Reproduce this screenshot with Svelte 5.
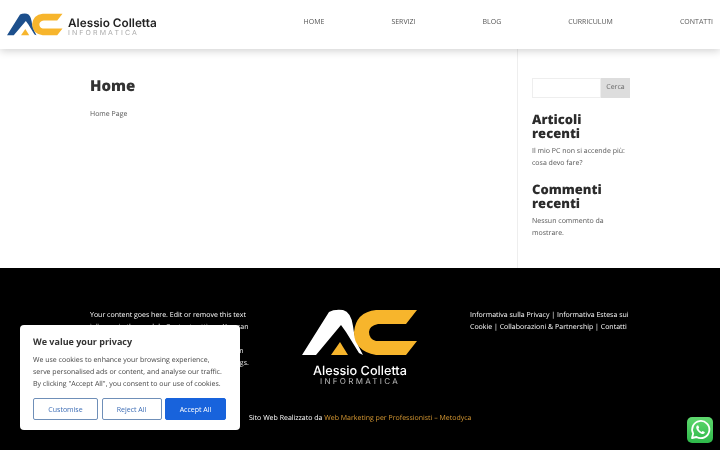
<script>
  const nav = ['HOME', 'SERVIZI', 'BLOG', 'CURRICULUM', 'CONTATTI'];
  const aPath = 'M0 46 L27 3 Q32 0 41 1 Q49 3 51 17 Q52 30 61 46 L57 44 L44 23 L39 16 L14 46 Z';
  const triPath = 'M29 46 L38 33 L46 46 Z';
  const cPath = 'M115 1 L104 15 L76 15 Q67 17 67 23 Q67 30 74 32 L115 32 L104 46 L74 46 Q52 42 52 23 Q54 3 74 1 Z';
</script>

<div class="page">
  <header class="top">
    <div class="brand">
      <svg class="mark" viewBox="0 0 116 47" width="56" height="23" aria-hidden="true">
        <path d={aPath} fill="#1c4f8c" />
        <path d={triPath} fill="#f7b52c" />
        <path d={cPath} fill="#f7b52c" />
      </svg>
      <div class="brand-text">
        <div class="brand-name">Alessio Colletta</div>
        <div class="brand-sub">INFORMATICA</div>
      </div>
    </div>
    <nav class="menu">
      {#each nav as item}<span>{item}</span>{/each}
    </nav>
  </header>

  <main class="content">
    <section class="article">
      <h1>Home</h1>
      <p>Home Page</p>
    </section>
    <aside class="side">
      <div class="search"><div class="field"></div><div class="btn">Cerca</div></div>
      <h2>Articoli recenti</h2>
      <p>Il mio PC non si accende più: cosa devo fare?</p>
      <h2>Commenti recenti</h2>
      <p>Nessun commento da mostrare.</p>
    </aside>
  </main>

  <footer class="foot">
    <div class="cols">
      <p class="col-a">Your content goes here. Edit or remove this text inline or in the module Content settings. You can also style every aspect of this content in the module Design settings and even apply custom CSS to this text in the module Advanced settings.</p>
      <div class="col-b">
        <svg viewBox="0 0 116 47" width="116" height="47" aria-hidden="true">
          <path d={aPath} fill="#fff" />
          <path d={triPath} fill="#f7b52c" />
          <path d={cPath} fill="#f7b52c" />
        </svg>
        <div class="logo-name">Alessio Colletta</div>
        <div class="logo-sub">INFORMATICA</div>
      </div>
      <p class="col-c">Informativa sulla Privacy | Informativa Estesa sui Cookie | Collaborazioni &amp; Partnership | Contatti</p>
    </div>
    <p class="credit">Sito Web Realizzato da <span>Web Marketing per Professionisti – Metodyca</span></p>
  </footer>
</div>

<div class="cookie">
  <h3>We value your privacy</h3>
  <p>We use cookies to enhance your browsing experience, serve personalised ads or content, and analyse our traffic. By clicking "Accept All", you consent to our use of cookies.</p>
  <div class="actions">
    <button class="ghost one">Customise</button>
    <button class="ghost two">Reject All</button>
    <button class="solid">Accept All</button>
  </div>
</div>

<div class="wa">
  <svg viewBox="0 0 26 26" width="26" height="26" aria-hidden="true">
    <defs>
      <linearGradient id="wa-bg" x1="0" y1="0" x2="0" y2="1">
        <stop offset="0" stop-color="#5fd86e" />
        <stop offset="1" stop-color="#2eb84a" />
      </linearGradient>
    </defs>
    <rect width="26" height="26" rx="5" fill="url(#wa-bg)" />
    <path d="M5 21 L6.2 16.6 A8.6 8.6 0 1 1 9.5 20 Z" fill="none" stroke="#fff" stroke-width="1.8" stroke-linejoin="round" />
    <path d="M10 8.5 Q9 9.5 9.2 11 Q10.4 15 15 17 Q16.8 17.5 17.8 15.8 L17.6 14.9 L15.6 13.9 L14.6 15 Q12.4 14 11.4 11.8 L12.2 10.8 L11.3 8.6 Z" fill="#fff" />
  </svg>
</div>

<style>
  :global(body) { margin: 0; background: #fff; overflow: hidden; text-rendering: geometricPrecision; }
  .page { width: 720px; height: 450px; display: flex; flex-direction: column; font-family: "Open Sans", sans-serif; color: #555; font-size: 7px; line-height: 12px; overflow: hidden; filter: blur(.3px); }
  .top { height: 49px; flex: none; display: flex; align-items: center; justify-content: space-between; padding: 0 7px; box-shadow: 0 2px 8px rgba(0,0,0,.18); position: relative; z-index: 2; background: #fff; }
  .brand { display: flex; align-items: center; gap: 5px; }
  .brand-name { font-family: Inter, sans-serif; font-weight: 600; font-size: 11.8px; line-height: 11px; color: #222; margin-top: 5.5px; }
  .brand-sub { font-family: Inter, sans-serif; font-size: 7px; letter-spacing: 2.1px; line-height: 8px; color: #aaa; }
  .menu { display: flex; gap: 67px; margin-top: -3px; padding-left: 1px; }
  .content { height: 219px; flex: none; display: flex; padding-left: 90px; }
  .article { width: 428px; box-sizing: border-box; border-right: 1px solid #eee; padding-top: 27px; }
  h1 { margin: 0 0 13px; font-size: 15px; line-height: 20px; font-weight: 800; color: #333; }
  .article p { margin: 0; }
  .side { width: 98px; margin-left: 14px; padding-top: 29px; }
  .search { display: flex; height: 20px; margin-bottom: 14px; }
  .field { flex: 1; border: 1px solid #eee; box-sizing: border-box; }
  .btn { width: 29px; background: #ddd; text-align: center; line-height: 20px; color: #666; }
  h2 { margin: 0 0 6px; font-size: 13px; line-height: 14px; font-weight: 800; color: #2b2b2b; }
  .side p { margin: 0 0 12px; line-height: 12px; }
  .foot { flex: 1; background: #000; color: #fff; padding: 42px 90px 0; }
  .cols { display: grid; grid-template-columns: 160px 220px 160px; }
  .cols p { margin: 0; }
  .col-a { width: 162px; }
  .col-b { display: flex; flex-direction: column; align-items: center; margin: -1px 0 0 0; }
  .col-b svg { display: block; }
  .logo-name { font-family: Inter, sans-serif; font-weight: 500; font-size: 12.7px; line-height: 11px; margin-top: 9.5px; }
  .logo-sub { font-family: Inter, sans-serif; font-size: 8px; letter-spacing: 2.3px; line-height: 8px; color: #bbb; }
  .credit { margin: 28px 0 0; padding-left: 159px; }
  .credit span { color: #d99a33; }
  .cookie { position: fixed; left: 20px; top: 325px; width: 220px; height: 105px; box-sizing: border-box; padding: 10px 14px 0 13px; background: #fff; border-radius: 4px; box-shadow: 0 1px 6px rgba(0,0,0,.2); font-family: "Open Sans", sans-serif; filter: blur(.3px); }
  .cookie h3 { margin: 0 0 7px; font-size: 9px; line-height: 13px; font-weight: 700; color: #333; }
  .cookie p { margin: 0 0 7px; font-size: 7px; line-height: 12px; color: #444; }
  .actions { display: flex; justify-content: space-between; }
  button { font: inherit; font-size: 7px; height: 22px; padding: 0; border-radius: 2px; box-sizing: border-box; }
  .ghost { background: #fff; color: #3d6db5; border: 1.5px solid #6f8fb8; }
  .one { width: 65px; }
  .two { width: 60px; }
  .solid { width: 61px; background: #1863dc; color: #fff; border: 1px solid #1863dc; }
  .wa { position: fixed; left: 687px; top: 417px; width: 26px; height: 26px; filter: blur(.3px); }
  .wa svg { display: block; }
</style>
